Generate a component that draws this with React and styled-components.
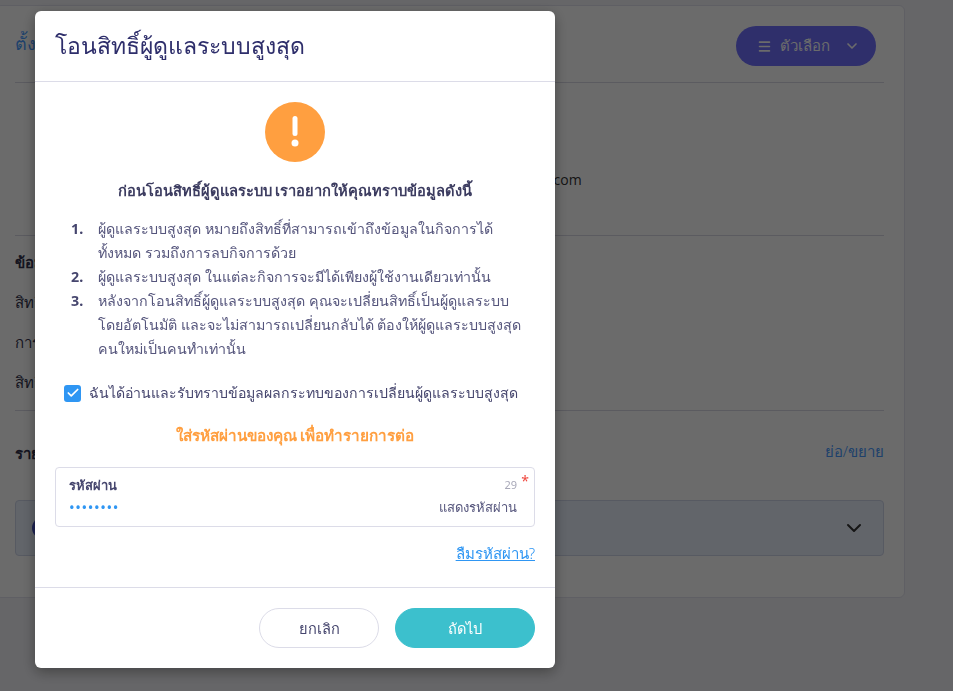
import React from "react";
import styled, { createGlobalStyle } from "styled-components";
import { Check, ChevronDown, Menu } from "lucide-react";

const Global = createGlobalStyle`
  html, body { margin: 0; padding: 0; height: 100%; background: #f3f3f7; overflow: hidden; }
  body { font-family: "Noto Sans", "Open Sans", "Liberation Sans", sans-serif; }
  * { box-sizing: border-box; }
`;

const Page = styled.div`
  width: 953px;
  height: 691px;
  padding: 5px 48px 0 0;
  overflow: hidden;
`;
const Card = styled.main`
  height: 593px;
  margin-left: -5px;
  padding: 20px 20px 0 19px;
  background: #fff;
  border: 1px solid #e3e3ee;
  border-radius: 6px;
`;
const CardHead = styled.header`
  display: flex;
  justify-content: space-between;
  align-items: center;
  height: 57px;
  border-bottom: 1px solid #d8d8e4;
  padding: 0 8px 16px 0;
`;
const PageTitle = styled.h1`
  margin: 0 0 6px;
  font-size: 18px;
  font-weight: 400;
  color: #4a9cff;
`;
const OptionsButton = styled.button`
  display: flex;
  align-items: center;
  gap: 8px;
  width: 140px;
  height: 40px;
  padding: 0 16px 0 21px;
  border: 0;
  border-radius: 20px;
  background: #7070ff;
  color: #fff;
  font: 300 15px "Noto Sans", sans-serif;
  span { flex: 1; text-align: left; }
`;
const InfoBlock = styled.section`
  height: 153px;
  border-bottom: 1px solid #d8d8e4;
  padding-top: 85px;
  padding-left: 425px;
  font: 14px/24px "Open Sans", sans-serif;
  color: #333;
  white-space: nowrap;
`;
const Values = styled.section`
  height: 175px;
  padding-top: 13px;
  border-bottom: 1px solid #d8d8e4;
`;
const Heading = styled.h2`
  margin: 0 0 15px;
  font-size: 15px;
  line-height: 26px;
  font-weight: 700;
  color: #33334d;
`;
const ValueRow = styled.div`
  font-size: 15px;
  line-height: 24px;
  margin-bottom: 16px;
  color: #33334d;
`;
const ListHead = styled.div`
  display: flex;
  justify-content: space-between;
  align-items: center;
  height: 26px;
  margin-top: 30px;
`;
const ListTitle = styled.h2`
  margin: 0;
  font-size: 15px;
  font-weight: 700;
  color: #33334d;
`;
const ToggleLink = styled.a`
  margin-bottom: 4px;
  font-size: 15px;
  font-weight: 300;
  color: #4a9cff;
`;
const Accordion = styled.div`
  display: flex;
  align-items: center;
  justify-content: space-between;
  height: 56px;
  margin-top: 33px;
  padding: 0 17px 0 16px;
  border: 1px solid #cfd6ea;
  border-radius: 4px;
  background: #e9f0fc;
`;
const Dot = styled.span`
  width: 22px;
  height: 22px;
  border-radius: 50%;
  background: #4a55c8;
`;

const Backdrop = styled.div`
  position: fixed;
  inset: 0;
  background: rgba(0, 0, 0, 0.58);
`;
const Modal = styled.div`
  position: fixed;
  left: 35px;
  top: 11px;
  width: 520px;
  height: 657px;
  display: flex;
  flex-direction: column;
  background: #fff;
  border-radius: 6px;
  box-shadow: 0 4px 14px rgba(0, 0, 0, 0.35);
  color: #46466e;
`;
const ModalHead = styled.header`
  height: 71px;
  display: flex;
  align-items: center;
  padding: 0 20px;
  border-bottom: 1px solid #dcdce8;
`;
const ModalTitle = styled.h2`
  margin: 0;
  font-size: 23px;
  font-weight: 400;
  color: #2e2e6b;
`;
const ModalBody = styled.div`
  flex: 1;
  padding: 20px 20px 0;
  display: flex;
  flex-direction: column;
`;
const WarnIcon = styled.div`
  align-self: center;
  width: 60px;
  height: 60px;
  border-radius: 50%;
  background: #ff9f40;
  display: flex;
  align-items: center;
  justify-content: center;
`;
const Lead = styled.p`
  margin: 16px 0 0;
  height: 24px;
  line-height: 24px;
  text-align: center;
  font-size: 14.7px;
  font-weight: 600;
  color: #3c3c60;
`;
const Notes = styled.ol`
  margin: 15px 8px 0 0;
  padding: 0 0 0 16px;
  list-style: none;
  counter-reset: note;
  font-size: 14.27px;
  line-height: 24px;
  font-weight: 300;
  color: #55557c;
`;
const Note = styled.li`
  display: grid;
  grid-template-columns: 27px 1fr;
  counter-increment: note;
  &::before {
    content: counter(note) ".";
    font-weight: 700;
    color: #46466e;
  }
`;
const Agree = styled.label`
  display: flex;
  align-items: center;
  gap: 8px;
  margin: 20px 0 0 9px;
  height: 24px;
  font-size: 14.14px;
  font-weight: 300;
  color: #46466e;
  white-space: nowrap;
`;
const CheckBox = styled.span`
  flex: none;
  width: 17px;
  height: 17px;
  border-radius: 3px;
  background: #2f96f3;
  display: flex;
  align-items: center;
  justify-content: center;
  color: #fff;
`;
const PasswordPrompt = styled.p`
  margin: 18px 0 0;
  height: 24px;
  line-height: 24px;
  text-align: center;
  font-size: 15.3px;
  font-weight: 600;
  color: #ff9f40;
`;
const Field = styled.div`
  position: relative;
  height: 60px;
  margin-top: 20px;
  padding: 7px 17px 0 13px;
  border: 1px solid #dcdce8;
  border-radius: 4px;
  display: grid;
  grid-template-columns: 1fr auto;
  grid-template-rows: 20px 24px;
  align-items: center;
`;
const FieldLabel = styled.span`
  font-size: 13px;
  font-weight: 600;
  color: #46466e;
`;
const Counter = styled.span`
  font-size: 11px;
  text-align: right;
  color: #a8a8b8;
  margin-bottom: 2px;
`;
const Asterisk = styled.span`
  position: absolute;
  right: 5px;
  top: 3px;
  font-size: 14px;
  color: #f0483e;
`;
const Dots = styled.span`
  font-size: 15px;
  letter-spacing: 0.6px;
  color: #2f96f3;
`;
const ShowPassword = styled.span`
  font-size: 13px;
  font-weight: 300;
  color: #55557c;
`;
const Forgot = styled.a`
  align-self: flex-end;
  margin-top: 14px;
  line-height: 24px;
  font-size: 15px;
  font-weight: 300;
  color: #2f96f3;
  text-decoration: underline;
`;
const ModalFoot = styled.footer`
  height: 81px;
  display: flex;
  justify-content: flex-end;
  gap: 16px;
  padding: 20px 20px 0;
  border-top: 1px solid #dcdce8;
`;
const Btn = styled.button`
  width: ${(p) => p.$w}px;
  height: 40px;
  border-radius: 20px;
  border: 1px solid ${(p) => (p.$primary ? "#3cc0cd" : "#dcdce8")};
  background: ${(p) => (p.$primary ? "#3cc0cd" : "#fff")};
  color: ${(p) => (p.$primary ? "#fff" : "#46466e")};
  font: 400 14.6px "Noto Sans", sans-serif;
`;

export default function App() {
  return (
    <>
      <Global />
      <Page>
        <Card>
          <CardHead>
            <PageTitle>ตั้งค่าบัญชี</PageTitle>
            <OptionsButton>
              <Menu size={15} strokeWidth={2.5} />
              <span>ตัวเลือก</span>
              <ChevronDown size={16} strokeWidth={2.5} />
            </OptionsButton>
          </CardHead>
          <InfoBlock>admin@example.com</InfoBlock>
          <Values>
            <Heading>ข้อมูลสิทธิ์</Heading>
            <ValueRow>สิทธิ์การใช้งาน</ValueRow>
            <ValueRow>การเข้าถึง</ValueRow>
            <ValueRow>สิทธิ์ผู้ดูแล</ValueRow>
          </Values>
          <ListHead>
            <ListTitle>รายการกิจการ</ListTitle>
            <ToggleLink>ย่อ/ขยาย</ToggleLink>
          </ListHead>
          <Accordion>
            <Dot />
            <ChevronDown size={24} strokeWidth={2} color="#333" />
          </Accordion>
        </Card>
      </Page>
      <Backdrop />
      <Modal>
        <ModalHead>
          <ModalTitle>โอนสิทธิ์ผู้ดูแลระบบสูงสุด</ModalTitle>
        </ModalHead>
        <ModalBody>
          <WarnIcon>
            <svg width="12" height="32" viewBox="0 0 12 32">
              <rect x="3.5" y="0" width="5" height="20" rx="2.5" fill="#fff" />
              <circle cx="6" cy="27" r="3.5" fill="#fff" />
            </svg>
          </WarnIcon>
          <Lead>ก่อนโอนสิทธิ์ผู้ดูแลระบบ เราอยากให้คุณทราบข้อมูลดังนี้</Lead>
          <Notes>
            <Note><span>ผู้ดูแลระบบสูงสุด หมายถึงสิทธิ์ที่สามารถเข้าถึงข้อมูลในกิจการได้ทั้งหมด รวมถึงการลบกิจการด้วย</span></Note>
            <Note><span>ผู้ดูแลระบบสูงสุด ในแต่ละกิจการจะมีได้เพียงผู้ใช้งานเดียวเท่านั้น</span></Note>
            <Note><span>หลังจากโอนสิทธิ์ผู้ดูแลระบบสูงสุด คุณจะเปลี่ยนสิทธิ์เป็นผู้ดูแลระบบ โดยอัตโนมัติ และจะไม่สามารถเปลี่ยนกลับได้ ต้องให้ผู้ดูแลระบบสูงสุดคนใหม่เป็นคนทำเท่านั้น</span></Note>
          </Notes>
          <Agree>
            <CheckBox><Check size={14} strokeWidth={3} /></CheckBox>
            ฉันได้อ่านและรับทราบข้อมูลผลกระทบของการเปลี่ยนผู้ดูแลระบบสูงสุด
          </Agree>
          <PasswordPrompt>ใส่รหัสผ่านของคุณ เพื่อทำรายการต่อ</PasswordPrompt>
          <Field>
            <FieldLabel>รหัสผ่าน</FieldLabel>
            <Counter>29</Counter>
            <Asterisk>*</Asterisk>
            <Dots>••••••••</Dots>
            <ShowPassword>แสดงรหัสผ่าน</ShowPassword>
          </Field>
          <Forgot>ลืมรหัสผ่าน?</Forgot>
        </ModalBody>
        <ModalFoot>
          <Btn $w={120}>ยกเลิก</Btn>
          <Btn $w={140} $primary>ถัดไป</Btn>
        </ModalFoot>
      </Modal>
    </>
  );
}
